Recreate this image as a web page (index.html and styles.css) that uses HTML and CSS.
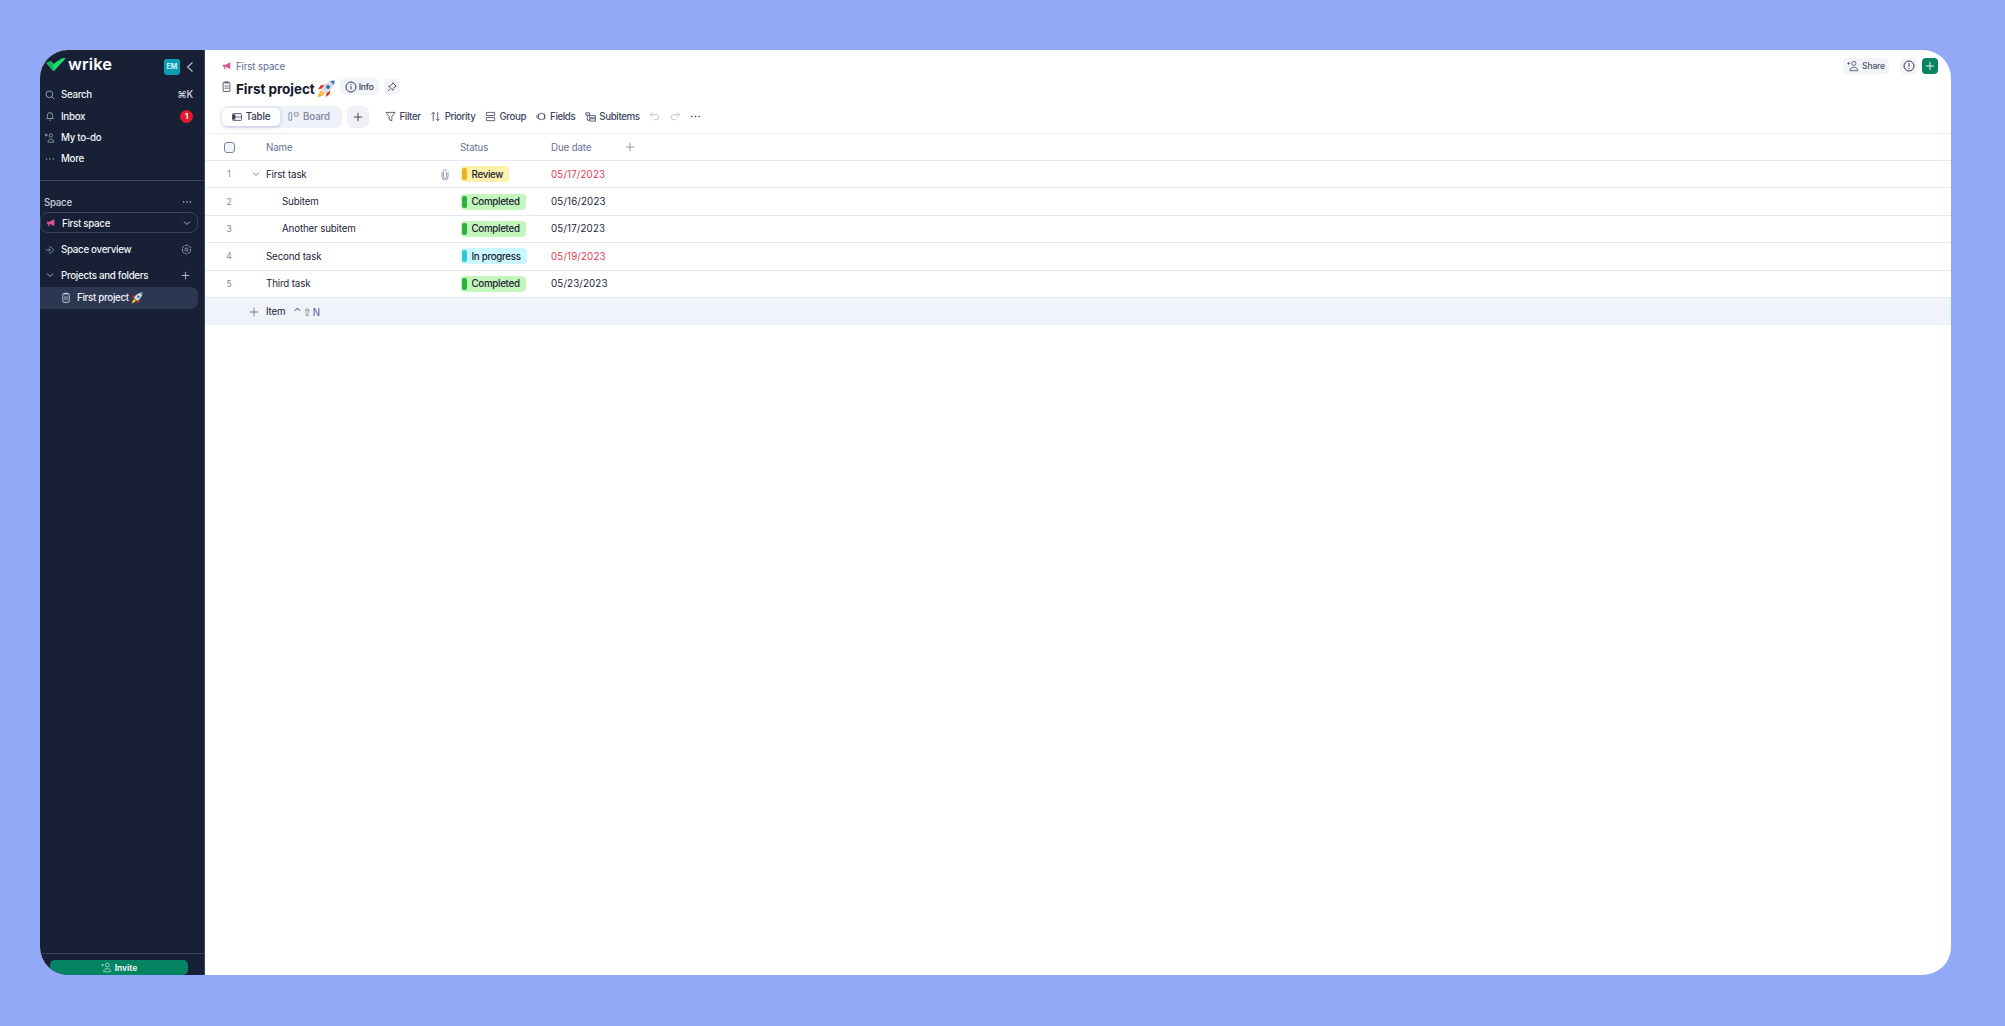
FILE: index.html
```html
<!DOCTYPE html>
<html lang="en">
<head>
<meta charset="utf-8">
<title>First project</title>
<link rel="stylesheet" href="styles.css">
</head>
<body>
<svg class="defs" width="0" height="0" aria-hidden="true">
  <defs>
    <symbol id="rocket" viewBox="0 0 16 16">
      <path d="M4.500 7.500 L.8 8.300 L3.400 4.700 L7.200 4.300 Z" fill="#d9362b"/>
      <path d="M8.500 11.500 L7.700 15.200 L11.300 12.600 L11.700 8.800 Z" fill="#d9362b"/>
      <path d="M4.200 8.300 C5.600 4.400 9.800 .9 15.600 .4 C15.100 6.200 11.600 10.400 7.700 11.800 Z" fill="#d5dce4"/>
      <path d="M11.600 .9 C12.900 .6 14.200 .5 15.600 .4 C15.500 1.800 15.400 3.100 15.100 4.400 Z" fill="#3f6ea8"/>
      <circle cx="9.800" cy="6.200" r="1.700" fill="#2f6fb5"/>
      <path d="M4.300 9.300 C2.600 10.200 1.200 12.600 .8 15.200 C3.400 14.800 5.800 13.400 6.700 11.700 Z" fill="#f4a922"/>
      <path d="M4.400 10.700 C3.500 11.400 3 12.200 2.700 13.300 C3.800 13 4.600 12.500 5.300 11.600 Z" fill="#fbe36a"/>
    </symbol>
    <symbol id="clipboard" viewBox="0 0 10 13">
      <rect x="1" y="1.500" width="8" height="11" rx="1.500" fill="none" stroke="currentColor" stroke-width="1.200"/>
      <rect x="2.500" y=".5" width="5" height="2.400" rx=".6" fill="currentColor"/>
      <path d="M2.500 6h5M2.500 8.500h5" stroke="currentColor" stroke-width="1.100"/>
    </symbol>
    <symbol id="horn" viewBox="0 0 12 12">
      <path d="M1 4.500h3L10 1.500v8L4 7H3.500l1 3H3L2 7H1z" fill="#d9558f"/>
    </symbol>
    <symbol id="plus" viewBox="0 0 12 12">
      <path d="M6 1v10M1 6h10" fill="none" stroke="currentColor" stroke-width="1.100"/>
    </symbol>
    <symbol id="chev" viewBox="0 0 10 10">
      <path d="M2 3.500 5 6.500 8 3.500" fill="none" stroke="currentColor" stroke-width="1"/>
    </symbol>
    <symbol id="person" viewBox="0 0 14 14">
      <circle cx="8" cy="4" r="2.400" fill="none" stroke="currentColor" stroke-width="1"/>
      <path d="M3.500 12.500c0-3 2-4 4.500-4s4.500 1 4.500 4z" fill="none" stroke="currentColor" stroke-width="1"/>
      <path d="M.5 4h3M2 2.500v3" fill="none" stroke="currentColor" stroke-width="1"/>
    </symbol>
  </defs>
</svg>

<div class="window">
  <aside class="sidebar">
    <div class="brand">
      <svg class="brand-mark" width="20" height="13" viewBox="0 0 20 13"><path d="M0 4.800 L5 2.800 L8.200 6.600 L8 13 L6.800 13 Z" fill="#12b85c"/><path d="M7 6.300 L16 .2 L20 0 L8 13 Z" fill="#22dc6e"/></svg>
      <span class="brand-name">wrike</span>
      <span class="avatar">EM</span>
      <svg class="collapse" width="10" height="12" viewBox="0 0 10 12"><path d="M7.500 1.500 2.500 6l5 4.500" fill="none" stroke="currentColor" stroke-width="1.100"/></svg>
    </div>
    <nav class="nav">
      <div class="nav-row">
        <svg class="nav-icon" viewBox="0 0 12 12"><circle cx="5.200" cy="5.200" r="4" fill="none" stroke="currentColor"/><path d="m8.200 8.200 3 3" stroke="currentColor"/></svg>
        <span class="nav-label">Search</span><span class="kbd">⌘K</span>
      </div>
      <div class="nav-row">
        <svg class="nav-icon" viewBox="0 0 12 12"><path d="M2 9c1-1 1-2 1-4a3 3 0 0 1 6 0c0 2 0 3 1 4zM5 11h2" fill="none" stroke="currentColor"/></svg>
        <span class="nav-label">Inbox</span><span class="badge">1</span>
      </div>
      <div class="nav-row">
        <svg class="nav-icon" viewBox="0 0 12 12"><circle cx="7" cy="3" r="2" fill="none" stroke="currentColor" stroke-width=".9"/><path d="M3.500 11c0-2.500 1.500-3.500 3.500-3.500s3.500 1 3.500 3.500zM.5 1.500h2v2h-2z" fill="none" stroke="currentColor" stroke-width=".9"/></svg>
        <span class="nav-label">My to-do</span>
      </div>
      <div class="nav-row">
        <svg class="nav-icon" viewBox="0 0 12 12"><path d="M2 6h.01M6 6h.01M10 6h.01" stroke="currentColor" stroke-width="1.600" stroke-linecap="round"/></svg>
        <span class="nav-label">More</span>
      </div>
    </nav>
    <div class="section">
      <div class="section-head">
        <span>Space</span>
        <svg width="10" height="12" viewBox="0 0 12 12"><path d="M2 6h.01M6 6h.01M10 6h.01" stroke="#c8cede" stroke-width="1.800" stroke-linecap="round"/></svg>
      </div>
      <div class="space-select">
        <svg width="10" height="10"><use href="#horn"/></svg>
        <span class="space-name">First space</span>
        <svg class="select-chev" width="10" height="10"><use href="#chev"/></svg>
      </div>
      <div class="nav-row overview">
        <svg class="nav-icon" viewBox="0 0 13 13"><path d="M5.500 2.500h2l4 4-4 4h-2M1 6.500h6M5 4.500l2 2-2 2" fill="none" stroke="currentColor" stroke-width=".9"/></svg>
        <span class="nav-label">Space overview</span>
        <svg class="gear" width="11" height="11" viewBox="0 0 13 13"><path d="M6.500 1l4.700 2.700v5.600L6.500 12 1.800 9.300V3.700z" fill="none" stroke="currentColor" stroke-width="1" stroke-dasharray="3 .8"/><circle cx="6.500" cy="6.500" r="1.800" fill="none" stroke="currentColor"/></svg>
      </div>
      <div class="nav-row folders">
        <svg class="nav-icon chev-dim"><use href="#chev"/></svg>
        <span class="nav-label">Projects and folders</span>
        <svg class="folder-plus" width="9" height="9"><use href="#plus"/></svg>
      </div>
      <div class="project-row">
        <svg class="project-icon" width="8" height="11"><use href="#clipboard"/></svg>
        <span class="project-name">First project</span>
        <svg width="12" height="12"><use href="#rocket"/></svg>
      </div>
    </div>
    <div class="sidebar-foot">
      <div class="invite">
        <svg width="11" height="11"><use href="#person"/></svg>
        <span>Invite</span>
      </div>
    </div>
  </aside>

  <main class="main">
    <div class="page-head">
      <div class="head-left">
        <div class="crumb">
          <svg width="10" height="10"><use href="#horn"/></svg>
          <span>First space</span>
        </div>
        <div class="title-row">
          <svg class="title-icon" width="9" height="11"><use href="#clipboard"/></svg>
          <h1 class="title">First project</h1>
          <svg width="18" height="18"><use href="#rocket"/></svg>
          <span class="chip info">
            <svg width="12" height="12" viewBox="0 0 12 12"><circle cx="6" cy="6" r="5" fill="none" stroke="currentColor"/><path d="M6 5.200v3.300M6 3.200v1" stroke="currentColor"/></svg>
            Info
          </span>
          <span class="chip pin">
            <svg width="10" height="10" viewBox="0 0 12 12"><path d="M7 1l4 4-1.500.5L7.500 8 7 10 2 5l2-.5 2.500-2zM3.500 8.500 1 11" fill="none" stroke="currentColor"/></svg>
          </span>
        </div>
      </div>
      <div class="head-right">
        <span class="chip share">
          <svg width="12" height="12"><use href="#person"/></svg>
          Share
        </span>
        <span class="chip help">
          <svg width="12" height="12" viewBox="0 0 12 12"><circle cx="6" cy="6" r="5" fill="none" stroke="currentColor"/><path d="M6 3v3.800M6 8v1" stroke="currentColor"/></svg>
        </span>
        <span class="add-btn"><svg width="10" height="10"><use href="#plus"/></svg></span>
      </div>
    </div>

    <div class="toolbar">
      <div class="tabs">
        <span class="tab active">
          <svg width="10" height="10" viewBox="0 0 12 12"><rect x=".5" y="2" width="11" height="8" rx="1" fill="none" stroke="currentColor"/><path d="M1 3h3v6H1z" fill="currentColor"/><path d="M.5 6h11" stroke="currentColor" stroke-width=".9"/></svg>
          Table
        </span>
        <span class="tab">
          <svg width="11" height="11" viewBox="0 0 12 12"><path d="M1 2h3v8H1zM7 2h4v3.500H7z" fill="none" stroke="currentColor" stroke-width=".9"/></svg>
          Board
        </span>
      </div>
      <span class="tab-add"><svg width="10" height="10"><use href="#plus"/></svg></span>
      <div class="tools">
        <span class="tool"><svg width="11" height="11" viewBox="0 0 12 12"><path d="M1 1.500h10L7.500 6v4.500l-3-1V6z" fill="none" stroke="currentColor" stroke-width=".9"/></svg>Filter</span>
        <span class="tool"><svg width="11" height="11" viewBox="0 0 12 12"><path d="M3.500 11V1.500M1.500 3.500l2-2 2 2M8.500 1v9.500M6.500 8.500l2 2 2-2" fill="none" stroke="currentColor" stroke-width=".9"/></svg>Priority</span>
        <span class="tool"><svg width="11" height="11" viewBox="0 0 12 12"><path d="M1.500 1.500h9v3.500h-9zM1.500 7h9v3.500h-9z" fill="none" stroke="currentColor" stroke-width=".9"/></svg>Group</span>
        <span class="tool"><svg width="11" height="11" viewBox="0 0 12 12"><circle cx="6" cy="6" r="3.500" fill="none" stroke="currentColor" stroke-width=".9"/><path d="M2.500 3v6M9.500 3v6M1 4.500v3" fill="none" stroke="currentColor" stroke-width=".9"/></svg>Fields</span>
        <span class="tool"><svg width="11" height="11" viewBox="0 0 12 12"><path d="M1 2h4v2.500H1zM5 5h6.500v2.500H5zM5 8.500h6.500V11H5zM2.500 4.500V10H5" fill="none" stroke="currentColor" stroke-width=".9"/></svg>Subitems</span>
        <svg class="undo" width="11" height="11" viewBox="0 0 12 12"><path d="M4 1.500 1.500 4 4 6.500M1.500 4H8a2.500 2.500 0 0 1 0 5.500H5" fill="none" stroke="currentColor" stroke-width=".9"/></svg>
        <svg class="undo" width="11" height="11" viewBox="0 0 12 12"><path d="M8 1.500 10.500 4 8 6.500M10.500 4H4a2.500 2.500 0 0 0 0 5.500h3" fill="none" stroke="currentColor" stroke-width=".9"/></svg>
        <svg class="more" width="11" height="11" viewBox="0 0 12 12"><path d="M2 6h.01M6 6h.01M10 6h.01" stroke="currentColor" stroke-width="1.700" stroke-linecap="round"/></svg>
      </div>
    </div>

    <div class="table">
      <div class="row head">
        <div class="c-num"><span class="check"></span></div>
        <div class="c-chev"></div>
        <div class="c-name">Name</div>
        <div class="c-status">Status</div>
        <div class="c-date">Due date</div>
        <svg class="col-add" width="10" height="10"><use href="#plus"/></svg>
      </div>
      <div class="row">
        <div class="c-num">1</div>
        <div class="c-chev"><svg width="10" height="10"><use href="#chev"/></svg></div>
        <div class="c-name">First task
          <svg class="clip" width="8" height="11" viewBox="0 0 8 11"><path d="M5.500 3v5a1.500 1.500 0 0 1-3 0V2.500a1 1 0 0 1 3-.5M1 3v5a3 3 0 0 0 6 0V3" fill="none" stroke="currentColor" stroke-width=".9"/></svg>
        </div>
        <div class="c-status"><span class="pill review"><i></i>Review</span></div>
        <div class="c-date late">05/17/2023</div>
      </div>
      <div class="row">
        <div class="c-num">2</div>
        <div class="c-chev"></div>
        <div class="c-name sub">Subitem</div>
        <div class="c-status"><span class="pill done"><i></i>Completed</span></div>
        <div class="c-date">05/16/2023</div>
      </div>
      <div class="row">
        <div class="c-num">3</div>
        <div class="c-chev"></div>
        <div class="c-name sub">Another subitem</div>
        <div class="c-status"><span class="pill done"><i></i>Completed</span></div>
        <div class="c-date">05/17/2023</div>
      </div>
      <div class="row">
        <div class="c-num">4</div>
        <div class="c-chev"></div>
        <div class="c-name">Second task</div>
        <div class="c-status"><span class="pill progress"><i></i>In progress</span></div>
        <div class="c-date late">05/19/2023</div>
      </div>
      <div class="row">
        <div class="c-num">5</div>
        <div class="c-chev"></div>
        <div class="c-name">Third task</div>
        <div class="c-status"><span class="pill done"><i></i>Completed</span></div>
        <div class="c-date">05/23/2023</div>
      </div>
      <div class="add-row">
        <svg class="add-plus" width="10" height="10"><use href="#plus"/></svg>
        <span class="add-item">Item</span>
        <span class="add-keys">^⇧N</span>
      </div>
    </div>
  </main>
</div>
</body>
</html>
```
FILE: styles.css
```css
* { box-sizing: border-box; }
html, body { height: 100%; }
body {
  margin: 0;
  padding: 50px 54px 51px 40px;
  background: #92a9f7;
  font-family: Inter, "Liberation Sans", sans-serif;
  font-size: 9.75px;
  letter-spacing: -.15px;
  color: #1d2236;
  overflow: hidden;
}
.defs { position: absolute; }
svg { display: block; flex: none; }
.window {
  display: flex;
  height: 925px;
  background: #fff;
  border-radius: 28px;
  overflow: hidden;
}

/* Sidebar */
.sidebar {
  width: 165px;
  flex: none;
  display: flex;
  flex-direction: column;
  background: #172035;
  border-right: 1px solid #39435e;
  color: #f2f4f9;
  font-weight: 500;
  letter-spacing: -.3px;
}
.brand {
  display: flex;
  align-items: center;
  height: 33px;
  padding: 0 9px 0 6px;
}
.brand-mark { margin-top: -4px; }
.brand-name {
  margin-left: 2px;
  font-size: 16.500px;
  font-weight: 600;
  letter-spacing: .1px;
  color: #fff;
  flex: 1;
  line-height: 1;
  margin-top: -4px;
}
.avatar {
  width: 16px;
  height: 16px;
  margin-right: 5px;
  border-radius: 3px;
  background: #0b9fb4;
  color: #d5f6f8;
  font-size: 7px;
  font-weight: 700;
  letter-spacing: 0;
  text-align: center;
  line-height: 16px;
}
.collapse { color: #b8c0d2; }
.nav { padding-top: 1.300px; height: 98px; border-bottom: 1px solid #39435e; }
.nav-row {
  display: flex;
  align-items: center;
  height: 21.300px;
  padding: 0 11px 0 5px;
}
.nav-icon { color: #aab2c5; margin-right: 6px; width: 10px; height: 10px; }
.nav-label { flex: 1; white-space: nowrap; }
.kbd { color: #d2d7e3; }
.badge {
  width: 13px;
  height: 13px;
  border-radius: 50%;
  background: #e01b2f;
  color: #fff;
  font-size: 7.500px;
  font-weight: 700;
  text-align: center;
  line-height: 13px;
}
.section-head {
  display: flex;
  align-items: center;
  justify-content: space-between;
  height: 15px;
  margin-top: 13px;
  padding: 1px 12px 0 4px;
  color: #c8cede;
}
.space-select {
  display: flex;
  align-items: center;
  height: 21px;
  width: 158px;
  margin-top: 3px;
  padding: 1px 5px 0 5px;
  border: 1px solid #39435e;
  border-radius: 8px;
}
.space-name { flex: 1; margin-left: 6px; }
.select-chev { color: #aab2c5; }
.overview { margin-top: 6px; height: 21px; }
.gear { color: #aab2c5; margin-right: 1px; }
.folders { margin-top: 4px; padding-top: 1px; }
.folder-plus { color: #c8cede; margin-right: 3px; }
.project-row {
  display: flex;
  align-items: center;
  width: 158px;
  height: 22px;
  margin-top: 1.700px;
  padding-left: 22px;
  background: #2d3752;
  border-radius: 0 7px 7px 0;
}
.project-icon { color: #c3c9d8; }
.project-name { margin: 0 2px 0 7px; }
.sidebar-foot {
  margin-top: auto;
  height: 22px;
  padding: 6px 0 0 10px;
  border-top: 1px solid #39435e;
}
.invite {
  display: flex;
  align-items: center;
  justify-content: center;
  gap: 3px;
  width: 138px;
  height: 15px;
  flex: none;
  border-radius: 5px;
  background: #058463;
  color: #fff;
  font-size: 8.500px;
  font-weight: 600;
  letter-spacing: 0;
}
.invite svg { color: #b6e3d3; }

/* Main */
.main { flex: 1; min-width: 0; display: flex; flex-direction: column; }
.page-head {
  display: flex;
  justify-content: space-between;
  height: 56px;
  padding: 0 13px 0 17px;
}
.crumb {
  display: flex;
  align-items: center;
  gap: 4px;
  height: 14px;
  margin-top: 9px;
  color: #656e96;
}
.title-row {
  display: flex;
  align-items: center;
  height: 22px;
  margin-top: 5px;
}
.title-icon { color: #5e6478; margin-right: 5px; margin-top: -5px; }
.title {
  margin: 0 2px 0 0;
  font-size: 13.500px;
  font-weight: 700;
  letter-spacing: -.05px;
  color: #14182b;
  white-space: nowrap;
}
.chip {
  display: inline-flex;
  align-items: center;
  justify-content: center;
  background: #f1f3f9;
  border-radius: 5px;
  color: #33394f;
}
.info { height: 17px; gap: 2px; width: 39px; margin-left: 5px; font-size: 8.500px; font-weight: 500; margin-bottom: 5px; }
.pin { width: 16px; height: 16px; margin-left: 5px; margin-bottom: 5px; }
.head-right { display: flex; align-items: flex-start; padding-top: 8px; }
.share { height: 16px; width: 46px; gap: 3px; font-size: 8.500px; font-weight: 500; color: #4c5368; }
.help { width: 17px; height: 16px; margin-left: 11px; }
.add-btn {
  display: flex;
  align-items: center;
  justify-content: center;
  width: 16px;
  height: 16px;
  margin-left: 5px;
  border-radius: 4px;
  background: #05845f;
  color: #fff;
}
.toolbar {
  display: flex;
  align-items: center;
  height: 28px;
  padding: 0 0 6px 17px;
  border-bottom: 1px solid #eceef4;
}
.tabs {
  display: flex;
  align-items: center;
  width: 120px;
  height: 22px;
  padding: 2px 2px 2px 0;
  background: #eff2fa;
  border-radius: 7px;
}
.tab {
  display: flex;
  align-items: center;
  justify-content: center;
  gap: 4px;
  height: 18px;
  width: 58px;
  color: #7c84a1;
  font-weight: 500;
}
.tab.active {
  background: #fff;
  color: #33394f;
  border-radius: 5px;
  box-shadow: 0 1px 4px rgba(70, 85, 150, .3);
}
.tab-add {
  display: flex;
  align-items: center;
  justify-content: center;
  width: 22px;
  height: 22px;
  margin-left: 5px;
  background: #eff1f7;
  border-radius: 6px;
  color: #33394f;
}
.tools { display: flex; align-items: center; gap: 9.500px; margin-left: 16px; color: #40465c; letter-spacing: -.4px; }
.tool { display: flex; align-items: center; gap: 3.500px; font-weight: 500; white-space: nowrap; }
.undo { color: #b7bccb; }
.more { color: #33394f; }

/* Table */
.table { display: flex; flex-direction: column; }
.row {
  display: flex;
  align-items: center;
  height: 27.400px;
  border-bottom: 1px solid #e4e8f1;
  flex: none;
}
.head { height: 27px; color: #666f96; }
.c-num { width: 48px; flex: none; display: flex; justify-content: center; color: #7e859a; font-size: 8.500px; }
.check {
  width: 11px;
  height: 11px;
  border: 1px solid #7c84a1;
  border-radius: 3px;
  background: #f4f5fa;
}
.c-chev { width: 13px; flex: none; color: #6f7689; margin-left: -2px; margin-right: 2px; }
.c-name {
  width: 194px;
  flex: none;
  display: flex;
  align-items: center;
  justify-content: space-between;
  padding-right: 11px;
  white-space: nowrap;
}
.sub { padding-left: 16px; }
.clip { color: #8e95b0; }
.c-status { width: 91px; flex: none; }
.c-date { width: 74px; flex: none; white-space: nowrap; letter-spacing: .15px; }
.head .c-date, .head .c-status { letter-spacing: -.15px; }
.late { color: #e3394f; }
.col-add { color: #868da0; }
.pill {
  display: inline-flex;
  align-items: center;
  height: 16px;
  margin-left: 1px;
  padding-right: 6px;
  border-radius: 4px;
  color: #1d2236;
  font-weight: 500;
  letter-spacing: -.3px;
}
.pill i {
  width: 5px;
  height: 12px;
  margin: 0 4.500px 0 1px;
  border-radius: 2px;
}
.review { background: #fff1ab; }
.review i { background: #ebb322; }
.done { background: #c3f6bb; }
.done i { background: #2bb13d; }
.progress { background: #c9f7fb; }
.progress i { background: #31c8d6; }
.add-row {
  display: flex;
  align-items: center;
  height: 27px;
  padding-top: 1px;
  background: #f0f3f9;
}
.add-plus { color: #6f7689; margin-left: 44px; }
.add-item { margin-left: 7px; width: 27px; }
.add-keys { color: #656e96; font-size: 10.500px; letter-spacing: 1px; font-family: "DejaVu Sans", Inter, sans-serif; }
```
